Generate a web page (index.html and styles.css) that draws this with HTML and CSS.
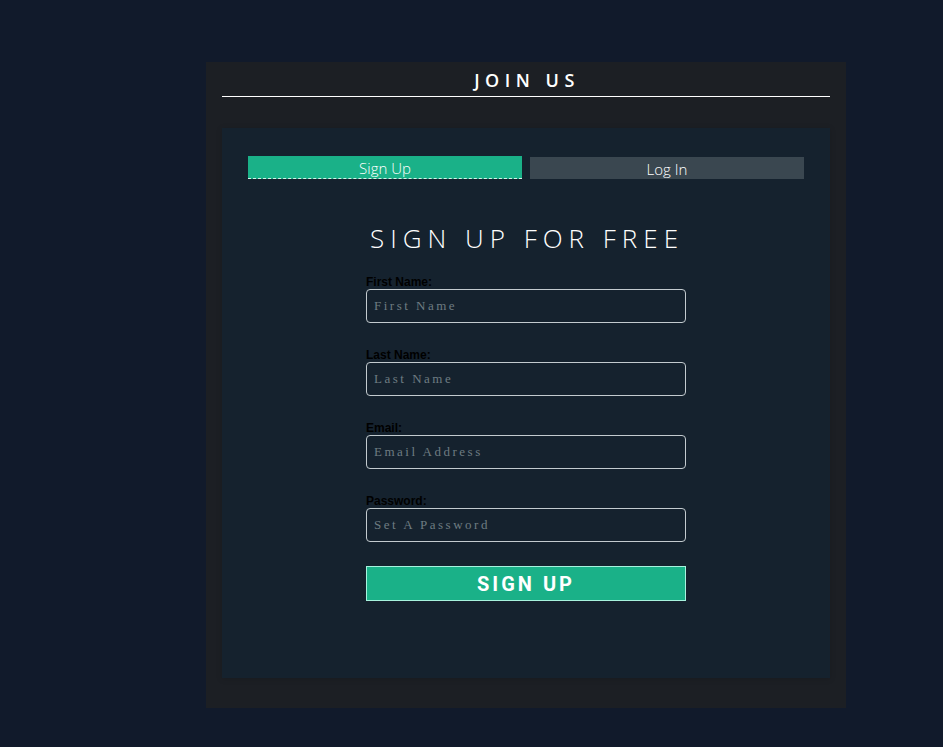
FILE: index.html
```html
<!DOCTYPE html>
<html>
<head>
<meta charset="utf-8">
<link rel="stylesheet" href="styles.css">
</head>
<body>
<div class="card">
  <h1 class="title">JOIN US</h1>
  <div class="panel">
    <div class="tabs">
      <div class="tab tab-active">Sign Up</div>
      <div class="tab tab-idle">Log In</div>
    </div>
    <form class="form">
      <h2 class="heading">SIGN UP FOR FREE</h2>
      <div class="field">
        <label class="label">First Name:</label>
        <input class="input" type="text" placeholder="First Name">
      </div>
      <div class="field">
        <label class="label">Last Name:</label>
        <input class="input" type="text" placeholder="Last Name">
      </div>
      <div class="field">
        <label class="label">Email:</label>
        <input class="input" type="text" placeholder="Email Address">
      </div>
      <div class="field">
        <label class="label">Password:</label>
        <input class="input" type="password" placeholder="Set A Password">
      </div>
      <button class="button" type="button">SIGN UP</button>
    </form>
  </div>
</div>
</body>
</html>
```
FILE: styles.css
```css
html, body {
  margin: 0;
  padding: 0;
  background: #111a2b;
}
body {
  padding: 62px 0 0 206px;
  min-height: 747px;
  box-sizing: border-box;
}
.card {
  width: 640px;
  height: 646px;
  box-sizing: border-box;
  background: #1c1f24;
  padding: 0 16px;
  display: flex;
  flex-direction: column;
}
.title {
  margin: 0;
  height: 34px;
  border-bottom: 1px solid #ffffff;
  color: #ffffff;
  font-family: "Open Sans", sans-serif;
  font-weight: 600;
  font-size: 18px;
  letter-spacing: 5.5px;
  text-align: center;
  line-height: 36px;
  padding-left: 2px;
}
.panel {
  margin-top: 31px;
  height: 550px;
  background: #15222e;
  padding: 28px 26px 0 26px;
  box-sizing: border-box;
  box-shadow: 0 1px 6px rgba(0,0,0,0.15);
}
.tabs {
  display: flex;
  gap: 8px;
}
.tab {
  flex: 1;
  height: 22px;
  line-height: 24px;
  text-align: center;
  color: #ffffff;
  font-family: "Open Sans", sans-serif;
  font-weight: 300;
  font-size: 15px;
}
.tab-active {
  background: #1ab188;
  border-bottom: 1px dashed #d8f2ea;
}
.tab-idle {
  background: #3a4750;
  margin-top: 1px;
}
.form {
  width: 320px;
  margin: 0 auto;
  display: flex;
  flex-direction: column;
}
.heading {
  margin: 43px 0 0 0;
  align-self: center;
  width: max-content;
  white-space: nowrap;
  text-align: center;
  color: #ffffff;
  font-family: "Open Sans", sans-serif;
  font-weight: 300;
  font-size: 26px;
  letter-spacing: 6px;
  line-height: 32px;
  padding-left: 2px;
}
.field {
  display: flex;
  flex-direction: column;
  margin-top: 21px;
}
.field + .field {
  margin-top: 25px;
}
.label {
  color: #000000;
  font-family: "Liberation Sans", Arial, sans-serif;
  font-weight: 700;
  font-size: 12px;
  line-height: 14px;
}
.input {
  margin: 0;
  height: 34px;
  box-sizing: border-box;
  border: 1px solid #c3cbcf;
  border-radius: 4px;
  background: transparent;
  padding: 0 7px;
  color: #ffffff;
  font-family: "Liberation Serif", serif;
  font-size: 13px;
  letter-spacing: 2.5px;
  outline: none;
}
.input::placeholder {
  color: #6e7c82;
}
.button {
  margin-top: 24px;
  height: 35px;
  box-sizing: border-box;
  border: 1px solid #a7f3de;
  background: #1ab188;
  color: #ffffff;
  font-family: "Roboto", "Liberation Sans", sans-serif;
  font-weight: 700;
  font-size: 20px;
  letter-spacing: 3px;
  padding: 0;
}
```
